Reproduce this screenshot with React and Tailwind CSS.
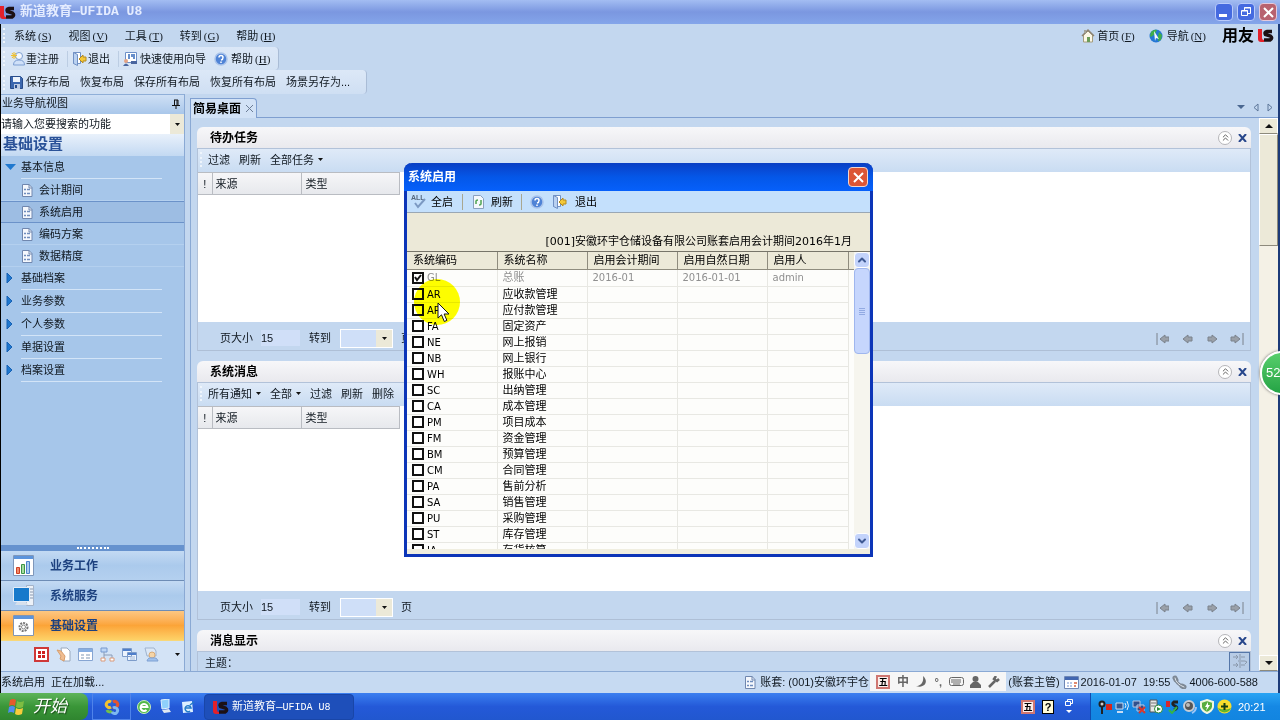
import { useState } from 'react'
import clsx from 'clsx'
import { ChevronsUp, ChevronDown, ChevronUp } from 'lucide-react'

const MENUS = [['系统', 'S'], ['视图', 'V'], ['工具', 'T'], ['转到', 'G'], ['帮助', 'H']]
const LAYOUT_ACTIONS = ['恢复布局', '保存所有布局', '恢复所有布局', '场景另存为...']
const BASIC_INFO = ['会计期间', '系统启用', '编码方案', '数据精度']
const GROUPS = ['基础档案', '业务参数', '个人参数', '单据设置', '档案设置']
const MODULES = [
  { code: 'GL', name: '总账', period: '2016-01', date: '2016-01-01', user: 'admin' },
  { code: 'AR', name: '应收款管理' },
  { code: 'AP', name: '应付款管理' },
  { code: 'FA', name: '固定资产' },
  { code: 'NE', name: '网上报销' },
  { code: 'NB', name: '网上银行' },
  { code: 'WH', name: '报账中心' },
  { code: 'SC', name: '出纳管理' },
  { code: 'CA', name: '成本管理' },
  { code: 'PM', name: '项目成本' },
  { code: 'FM', name: '资金管理' },
  { code: 'BM', name: '预算管理' },
  { code: 'CM', name: '合同管理' },
  { code: 'PA', name: '售前分析' },
  { code: 'SA', name: '销售管理' },
  { code: 'PU', name: '采购管理' },
  { code: 'ST', name: '库存管理' },
  { code: 'IA', name: '存货核算' },
]

export default function App() {
  return (
    <div
      lang="zh-CN"
      className="relative flex h-screen flex-col overflow-hidden whitespace-nowrap bg-[#c3d7ef] font-['Liberation_Sans','Noto_Sans_CJK_SC',sans-serif] text-[11px] leading-4 text-[#101820]"
    >
      <TitleBar />
      <div className="flex min-h-0 flex-1 flex-col border-l border-r-2 border-l-black border-r-[#1c3a78]">
        <MenuBar />
        <Toolbars />
        <div className="flex min-h-0 flex-1 gap-[5px]">
          <Sidebar />
          <Desktop />
        </div>
        <StatusBar />
      </div>
      <Taskbar />
      <div className="pointer-events-none absolute inset-0 flex items-center justify-center pr-[3px]">
        <EnableDialog />
      </div>
      <div className="absolute -right-6 top-[351px] flex h-11 w-11 items-center rounded-full border-2 border-white bg-linear-to-b from-[#57cf6c] to-[#23a345] pl-1 text-[13px] text-white shadow-[0_0_3px_#555]">
        52
      </div>
    </div>
  )
}

function TitleBar() {
  return (
    <header className="flex h-6 shrink-0 items-center bg-linear-to-b from-[#a3bdf2] via-[#7b97e0] to-[#84a5ea] pr-[3px]">
      <Us />
      <h1 className="ml-1 flex-1 font-['Liberation_Mono','Noto_Sans_CJK_SC',monospace] text-[13px] font-bold text-[#e4ecff]">
        新道教育—UFIDA U8
      </h1>
      <div className="flex gap-1">
        <button aria-label="最小化" className="flex h-[18px] w-[18px] items-end rounded-sm border border-[#b9cbfb] bg-[#456ae0] p-[3px]">
          <span className="h-[3px] w-2 bg-white" />
        </button>
        <button aria-label="还原" className="flex h-[18px] w-[18px] items-center justify-center rounded-sm border border-[#b9cbfb] bg-[#456ae0]">
          <Restore />
        </button>
        <button aria-label="关闭" className="flex h-[18px] w-[18px] items-center justify-center rounded-sm border border-[#e3c9dc] bg-[#b8626f]">
          <Cross />
        </button>
      </div>
    </header>
  )
}

function Hot({ text, letter }) {
  return (
    <span>
      {text}
      <span className="ml-0.5 font-['Liberation_Serif',serif]">(<u>{letter}</u>)</span>
    </span>
  )
}

function MenuBar() {
  return (
    <nav className="flex h-[23px] shrink-0 items-center pl-0.5">
      <Grip />
      <div className="flex flex-1 gap-[17px] pl-2">
        {MENUS.map(([text, letter]) => (
          <button key={letter}><Hot text={text} letter={letter} /></button>
        ))}
      </div>
      <a href="#home" className="flex items-center gap-0.5"><HomeIcon /><Hot text="首页" letter="F" /></a>
      <a href="#nav" className="ml-[14px] flex items-center gap-1"><GlobeIcon /><Hot text="导航" letter="N" /></a>
      <div className="ml-4 mr-1 flex items-center gap-1 text-base font-bold leading-4 text-black">用友<Us /></div>
    </nav>
  )
}

function Toolbars() {
  return (
    <div className="flex shrink-0 flex-col items-start">
      <div className="flex h-[23px] items-center rounded-r border-r border-[#a9bcd6] bg-linear-to-b from-[#dbe7f7] to-[#d3e2f4] pl-0.5 pr-2">
        <Grip />
        <button className="flex items-center pl-1"><UserIcon />重注册</button>
        <Divider />
        <button className="flex items-center gap-px"><ExitIcon />退出</button>
        <Divider />
        <button className="flex items-center gap-0.5"><WizardIcon />快速使用向导</button>
        <button className="ml-2 flex items-center gap-[3px]"><HelpIcon /><Hot text="帮助" letter="H" /></button>
      </div>
      <div className="flex h-6 items-center rounded-r border-r border-[#a9bcd6] bg-linear-to-b from-[#dce8f7] to-[#cfdff3] pl-0.5 pr-4">
        <Grip />
        <div className="flex gap-[10px] pl-1">
          <button className="flex items-center gap-[3px]"><SaveIcon />保存布局</button>
          {LAYOUT_ACTIONS.map(text => <button key={text}>{text}</button>)}
        </div>
      </div>
    </div>
  )
}

function Grip() {
  return <span className="h-[15px] w-[3px] border-l-2 border-dotted border-[#eff5fc]" />
}

function Divider() {
  return <span className="ml-2 mr-1 h-4 w-px bg-[#bccde3]" />
}

function Sidebar() {
  const [selected, setSelected] = useState('系统启用')

  return (
    <aside className="flex w-[184px] shrink-0 flex-col border-r border-[#8aa9d4] bg-[#a6c6ea]">
      <div className="flex h-5 shrink-0 items-start justify-between border-t border-[#8fafd8] bg-linear-to-b from-[#cfe0f5] to-[#a9c7ea] pl-px pr-1">
        业务导航视图
        <svg className="mt-1" width="8" height="10" viewBox="0 0 8 10" fill="none" stroke="#111"><path d="M2 1h4M2.500 1v5M5 1v5M6 1v5M0 6.500h8M4 7v3" /></svg>
      </div>
      <div className="flex h-5 shrink-0 bg-white">
        <input aria-label="搜索功能" defaultValue="请输入您要搜索的功能" className="min-w-0 flex-1 bg-white outline-none" />
        <button aria-label="搜索历史" className="flex w-[14px] items-center justify-center bg-[#ece9d8]"><Caret /></button>
      </div>
      <h2 className="h-[22px] shrink-0 bg-linear-to-b from-[#e9f1fb] to-[#c3d9f2] pl-0.5 text-[15px] leading-5 font-bold text-[#2a5298]">基础设置</h2>

      <nav className="flex min-h-0 flex-1 flex-col overflow-hidden">
        <GroupRow text="基本信息" open />
        {BASIC_INFO.map(text => (
          <button
            key={text}
            onClick={() => setSelected(text)}
            className={clsx(
              'flex h-[22px] shrink-0 items-center gap-1.5 border-y pl-5',
              selected === text ? 'border-[#6b92c9] bg-[#9dbde3]' : 'border-transparent border-b-[#b4d0ef]'
            )}
          >
            <PageIcon />{text}
          </button>
        ))}
        {GROUPS.map(text => <GroupRow key={text} text={text} />)}
      </nav>

      <div className="flex h-1.5 shrink-0 items-center justify-center bg-[#6692ce]">
        <span className="w-8 border-t-2 border-dotted border-white" />
      </div>
      <NavButton text="业务工作" icon={<ChartIcon />} />
      <NavButton text="系统服务" icon={<MonitorIcon />} />
      <NavButton text="基础设置" icon={<GearIcon />} active />
      <div className="flex h-[30px] shrink-0 items-start justify-end gap-1.5 bg-[#d3e3f6] pr-1 pt-1.5">
        <MiniIcons />
        <span className="pt-1.5"><Caret /></span>
      </div>
    </aside>
  )
}

function GroupRow({ text, open }) {
  return (
    <button className="flex h-[23px] shrink-0 items-center">
      <span className="w-5 pl-1">
        {open
          ? <svg width="11" height="7" viewBox="0 0 11 7"><path d="M0 0h11L5.500 6z" fill="#1f78cf" /></svg>
          : <svg width="8" height="11" viewBox="0 0 8 11"><path d="M2 0l5 5-5 5z" fill="#1f78cf" stroke="#1660b4" /></svg>}
      </span>
      <span className="mr-[22px] h-full flex-1 border-b border-[#d3e4f7] pt-[3px] text-left leading-4">{text}</span>
    </button>
  )
}

function NavButton({ text, icon, active }) {
  return (
    <button
      className={clsx(
        'flex h-[30px] shrink-0 items-center gap-4 border-b pl-3 text-xs font-bold text-[#1d417f]',
        active
          ? 'border-[#f8d779] bg-linear-to-b from-[#fdc781] via-[#fba438] to-[#fdd267]'
          : 'border-[#6d8cb5] bg-linear-to-b from-[#c3daf3] via-[#abcaec] to-[#b4d0ef]'
      )}
    >
      {icon}{text}
    </button>
  )
}

function Desktop() {
  return (
    <main className="flex min-w-0 flex-1 flex-col pt-1">
      <div className="flex h-5 shrink-0 items-end justify-between border-b border-[#7f9fd0]">
        <button className="-mb-px flex h-5 items-center gap-1 rounded-tr border border-b-0 border-[#7f9fd0] bg-[#d2e2f6] px-0.5 text-xs font-bold text-black">
          简易桌面
          <svg width="9" height="9" viewBox="0 0 9 9" stroke="#6c7d96"><path d="M1 1l7 7M8 1l-7 7" /></svg>
        </button>
        <div className="flex h-5 items-center gap-2 pr-[5px]">
          <svg width="8" height="5" viewBox="0 0 8 5"><path d="M0 0h8L4 4z" fill="#4a6790" /></svg>
          <svg width="6" height="9" viewBox="0 0 6 9" fill="none" stroke="#5d7699"><path d="M5 1v7L1 4.500z" /></svg>
          <svg width="6" height="9" viewBox="0 0 6 9" fill="none" stroke="#5d7699"><path d="M1 1v7l4-3.500z" /></svg>
        </div>
      </div>

      <div className="flex min-h-0 flex-1 border-l border-[#8aa9d4]">
        <div className="flex min-w-0 flex-1 flex-col gap-[10px] pl-1.5 pr-2 pt-[9px]">
          <Panel title="待办任务" className="h-[224px] shrink-0">
            <PanelToolbar actions={['过滤', '刷新', '全部任务▾']} />
            <TaskTable />
            <Pager id="tasks" />
          </Panel>
          <Panel title="系统消息" className="min-h-0 flex-1">
            <PanelToolbar actions={['所有通知▾', '全部▾', '过滤', '刷新', '删除']} />
            <TaskTable />
            <Pager id="messages" />
          </Panel>
          <Panel title="消息显示" className="h-[41px] shrink-0">
            <div className="flex h-5 items-start justify-between pl-[7px]">
              <span className="pt-[3px] leading-4">主题：</span>
              <button aria-label="固定" className="flex h-5 w-[21px] items-center justify-center border border-[#5576a8] bg-[#b8cce6]">
                <svg width="14" height="16" viewBox="0 0 14 16" fill="none" stroke="#8a98ab"><path d="M0 3h5M3 1l2 2-2 2M7 0v6M8 3h4M0 11h5M3 9l2 2-2 2M7 8v6M8 11h4M5 7h7l2 1-2 2" /></svg>
              </button>
            </div>
          </Panel>
        </div>
        <div className="flex w-[19px] shrink-0 flex-col bg-[#f4f1e6]">
          <button aria-label="向上滚动" className="flex h-4 items-center justify-center border border-white border-b-[#8d8a7c] bg-[#ece9d8]">
            <svg width="8" height="5" viewBox="0 0 8 5"><path d="M4 0l4 4H0z" fill="#111" /></svg>
          </button>
          <div className="h-28 border border-white border-b-[#8d8a7c] border-r-[#8d8a7c] bg-[#ece9d8]" />
          <div className="flex-1" />
          <button aria-label="向下滚动" className="flex h-4 items-center justify-center border border-white border-b-[#8d8a7c] bg-[#ece9d8]">
            <svg width="8" height="5" viewBox="0 0 8 5"><path d="M0 0h8L4 4z" fill="#111" /></svg>
          </button>
        </div>
      </div>
    </main>
  )
}

function Panel({ title, className, children }) {
  return (
    <section className={clsx('flex flex-col', className)}>
      <div className="flex h-[21px] shrink-0 items-center rounded-t-md bg-linear-to-b from-[#f7f7f9] to-[#e9e9ee] pl-[13px] pr-px">
        <h3 className="flex-1 text-xs font-bold text-black">{title}</h3>
        <button aria-label="折叠" className="flex h-[14px] w-[14px] items-center justify-center rounded-full border border-[#b5b5b9] bg-white">
          <ChevronsUp size={11} color="#555" />
        </button>
        <button aria-label="关闭" className="ml-0.5 flex w-4 justify-center">
          <svg width="9" height="8" viewBox="0 0 9 8" stroke="#27468b" strokeWidth="2"><path d="M1 0l7 8M8 0l-7 8" /></svg>
        </button>
      </div>
      <div className="flex min-h-0 flex-1 flex-col overflow-hidden border border-b-0 border-[#b2c2d9]">{children}</div>
    </section>
  )
}

function PanelToolbar({ actions }) {
  return (
    <div className="flex h-[23px] shrink-0 items-center gap-[9px] bg-linear-to-b from-[#dfeaf8] to-[#c9dcf2] pb-0.5">
      <div className="flex items-center gap-[5px] pl-0.5"><Grip />
        <ActionButton text={actions[0]} />
      </div>
      {actions.slice(1).map(text => <ActionButton key={text} text={text} />)}
    </div>
  )
}

function ActionButton({ text }) {
  const menu = text.endsWith('▾')
  return (
    <button className="flex items-center gap-1">
      {text.replace('▾', '')}
      {menu && <Caret />}
    </button>
  )
}

function TaskTable() {
  return (
    <div className="min-h-0 flex-1 bg-white">
      <table className="w-[202px] table-fixed border-collapse text-left">
        <thead>
          <tr className="h-[22px] bg-linear-to-b from-[#f6f6f8] to-[#e6e8ec]">
            <th className="w-[14px] border border-l-0 border-[#b9bcc2] text-center font-normal">!</th>
            <th className="w-[89px] border border-[#b9bcc2] pl-[3px] font-normal">来源</th>
            <th className="border border-[#b9bcc2] pl-1 font-normal">类型</th>
          </tr>
        </thead>
      </table>
    </div>
  )
}

function Pager({ id }) {
  return (
    <div className="flex h-[29px] shrink-0 items-center border-b border-[#aebfd6] bg-[#c3d7ef] pl-[22px] pr-1.5 pt-1">
      <label htmlFor={`${id}-size`}>页大小</label>
      <input id={`${id}-size`} defaultValue="15" className="ml-2 h-4 w-[39px] bg-[#d0dff8]" />
      <label htmlFor={`${id}-page`} className="ml-[9px]">转到</label>
      <div className="relative ml-[9px] mr-2 h-[19px] w-[53px]">
        <select id={`${id}-page`} className="h-full w-full appearance-none border border-white bg-[#cfdff8]"><option /></select>
        <span className="pointer-events-none absolute inset-y-px right-px flex w-4 items-center justify-center bg-[#ece9d8]"><Caret /></span>
      </div>
      <span className="flex-1">页</span>
      <div className="flex gap-[11px] pt-0.5">
        <PageArrow label="首页" d="M2 1v12M5 7l5-4v2h4v4h-4v2z" />
        <PageArrow label="上一页" d="M3 7l5-4v2h4v4H8v2z" />
        <PageArrow label="下一页" d="M12 7L7 3v2H3v4h4v2z" />
        <PageArrow label="末页" d="M13 1v12M10 7L5 3v2H1v4h4v2z" />
      </div>
    </div>
  )
}

function PageArrow({ label, d }) {
  return (
    <button aria-label={label}>
      <svg width="14" height="14" viewBox="0 0 14 14" fill="#9aa0a8" stroke="#7b828c"><path d={d} /></svg>
    </button>
  )
}

function EnableDialog() {
  return (
    <div
      role="dialog"
      aria-label="系统启用"
      className="pointer-events-auto relative flex h-[394px] w-[469px] flex-col rounded-t-lg border-[3px] border-t-0 border-[#0c35b8] bg-[#ece9d8] text-black"
    >
      <div className="-mx-[3px] flex h-7 shrink-0 items-center justify-between rounded-t-lg bg-linear-to-b from-[#0a3fc4] via-[#0457e8] to-[#0660fb] pl-1 pr-[5px]">
        <h2 className="text-xs font-bold text-white">系统启用</h2>
        <button aria-label="关闭" className="flex h-5 w-5 items-center justify-center rounded border border-[#f0d5cf] bg-[#dc5535]"><Cross /></button>
      </div>
      <div className="flex h-[22px] shrink-0 items-center border-b border-[#9aa7b4] bg-[#c4e0fc] pl-1">
        <button className="flex items-center gap-1"><AllIcon />全启</button>
        <span className="mx-[9px] h-4 w-px bg-[#a9a790]" />
        <button className="flex items-center gap-1.5"><RefreshIcon />刷新</button>
        <span className="mx-2 h-4 w-px bg-[#a9a790]" />
        <button aria-label="帮助"><HelpIcon /></button>
        <button className="ml-2 flex items-center gap-2"><ExitIcon />退出</button>
      </div>
      <p className="shrink-0 pb-px pr-[18px] pt-[21px] text-right font-['DejaVu_Sans','Noto_Sans_CJK_SC',sans-serif]">
        [001]安徽环宇仓储设备有限公司账套启用会计期间2016年1月
      </p>
      <div className="flex min-h-0 flex-1 border-t border-[#77756a] bg-[#fdfdfb]">
        <div className="min-w-0 flex-1 overflow-hidden">
          <ModuleTable />
        </div>
        <div className="flex w-4 shrink-0 flex-col bg-[#f6f5ee]">
          <button aria-label="向上滚动" className="flex h-4 items-center justify-center rounded-sm border border-white bg-[#c3d3fb] text-[#3f5a94]"><ChevronUp size={12} strokeWidth={4} /></button>
          <div className="flex h-[86px] flex-col items-center justify-center gap-px rounded-sm border border-[#9fb6ee] bg-[#c6d6fd]">
            <span className="h-px w-1.5 bg-[#92aae2]" />
            <span className="h-px w-1.5 bg-[#92aae2]" />
            <span className="h-px w-1.5 bg-[#92aae2]" />
            <span className="h-px w-1.5 bg-[#92aae2]" />
          </div>
          <div className="flex-1" />
          <button aria-label="向下滚动" className="flex h-4 items-center justify-center rounded-sm border border-white bg-[#c3d3fb] text-[#3f5a94]"><ChevronDown size={12} strokeWidth={4} /></button>
        </div>
      </div>
      <div className="h-[5px] shrink-0 bg-[#f0eee0]" />

      {/* click highlight with the pointer */}
      <div className="pointer-events-none absolute left-[7px] top-[116px] h-[46px] w-[46px] rounded-full bg-[#ffff00] mix-blend-multiply" />
      <svg className="pointer-events-none absolute left-[30px] top-[139px]" width="13" height="21" viewBox="0 0 13 21" fill="#fff" stroke="#111">
        <path d="M1 1v15l3.500-3.200L7.300 19.500l2.600-1.100-2.800-6.400H12z" />
      </svg>
    </div>
  )
}

function ModuleTable() {
  return (
    <table className="w-full table-fixed border-collapse text-left">
      <thead>
        <tr className="h-[17px] bg-[#ece9d8]">
          {['系统编码', '系统名称', '启用会计期间', '启用自然日期'].map(text => (
            <th key={text} className="w-[90px] border-b border-r border-[#8f8c7e] p-0 pl-1.5 font-normal">{text}</th>
          ))}
          <th className="w-[81px] border-b border-r border-[#8f8c7e] p-0 pl-1.5 font-normal">启用人</th>
          <th className="border-b border-[#8f8c7e] p-0" />
        </tr>
      </thead>
      <tbody className="font-['DejaVu_Sans','Noto_Sans_CJK_SC',sans-serif] text-[10px] leading-[15px]">
        {MODULES.map(row => <ModuleRow key={row.code} {...row} />)}
      </tbody>
    </table>
  )
}

function ModuleRow({ code, name, period, date, user }) {
  const [checked, setChecked] = useState(Boolean(period))
  const cell = 'border-b border-r border-[#e8e8e3] p-0 pl-[5px]'

  return (
    <tr className={clsx(period ? 'h-[17px] text-[#8f8f8f]' : 'h-4')}>
      <td className={cell}>
        <label className="relative flex items-center gap-[3px]">
          <input
            type="checkbox"
            checked={checked}
            disabled={Boolean(period)}
            onChange={e => setChecked(e.target.checked)}
            className="h-3 w-3 appearance-none border-2 border-[#111] bg-white"
          />
          {checked && (
            <svg className="absolute left-0.5" width="8" height="8" viewBox="0 0 8 8" fill="none" stroke="#111" strokeWidth="2"><path d="M1 3l2 3 4-5" /></svg>
          )}
          {code}
        </label>
      </td>
      <td className={clsx(cell, 'text-[11px]')}>{name}</td>
      <td className={cell}>{period}</td>
      <td className={cell}>{date}</td>
      <td className={cell}>{user}</td>
      <td />
    </tr>
  )
}

function StatusBar() {
  return (
    <footer className="flex h-[22px] shrink-0 items-center border-t border-[#8aa9d4] bg-[#c6daf2] pb-0.5">
      <span className="flex-1">系统启用 &nbsp;正在加载...</span>
      <PageIcon />
      <span className="ml-1 w-[110px]">账套: (001)安徽环宇仓</span>
      <div className="flex h-[19px] w-[136px] items-center justify-between bg-[#f6f6f6] px-1.5 text-[#666]">
        <WuBadge />
        <span className="text-xs font-bold">中</span>
        <svg width="12" height="12" viewBox="0 0 12 12" fill="#666"><path d="M7 0c6 5 2 13-7 10 5 0 8-4 7-10z" /></svg>
        <span className="font-bold">°,</span>
        <svg width="15" height="9" viewBox="0 0 15 9" fill="none" stroke="#666"><rect x=".5" y=".5" width="14" height="8" rx="2" /><path d="M2 3h10M2 5h10M4 7h7" /></svg>
        <svg width="11" height="12" viewBox="0 0 11 12" fill="#666"><circle cx="5.500" cy="3" r="3" /><path d="M0 12V9l3-3h5l3 3v3z" /></svg>
        <svg width="12" height="12" viewBox="0 0 12 12" fill="none" stroke="#666" strokeWidth="2.500"><path d="M1 11l6-6M11 3L9 5 6 3l2-3" /></svg>
      </div>
      <span className="ml-0.5">(账套主管)</span>
      <svg className="ml-1" width="15" height="14" viewBox="0 0 15 14">
        <path d="M.5 1.500h14v12H.500z" fill="#fff" stroke="#6e87b5" />
        <path d="M1 2h13v3H1z" fill="#4166b0" />
        <path d="M3 7h2v2H3zm3 0h2v2H6zM3 10h2v2H3zm3 0h2v2H6z" fill="#b8c8e6" />
        <path d="M10 7h3v2h-3zm0 3h2v2h-2z" fill="#e08a70" />
      </svg>
      <span className="ml-0.5">2016-01-07 &nbsp;19:55</span>
      <svg className="mx-0.5" width="15" height="14" viewBox="0 0 15 14" fill="none" strokeLinecap="round">
        <path d="M3 3q1 6 9 9" stroke="#7d8894" strokeWidth="3" />
        <path d="M3 3l1 2M10 11l2 1" stroke="#7d8894" strokeWidth="5" />
        <path d="M3 3q1 6 9 9" stroke="#dfe4ea" />
      </svg>
      <span className="mr-5">4006-600-588</span>
    </footer>
  )
}

function WuBadge() {
  return <span className="flex h-[14px] w-[14px] items-center justify-center border-2 border-[#cf7771] bg-[#fbeeea] text-[9px] leading-[10px] font-bold text-black">五</span>
}

function Taskbar() {
  return (
    <div className="flex h-[27px] shrink-0 bg-linear-to-b from-[#3c7ff0] via-[#2459d8] to-[#2157cf] text-white">
      <button className="flex w-[88px] items-center gap-2 rounded-r-lg bg-linear-to-b from-[#5eb45a] via-[#3a9638] to-[#2f852f] pl-2 text-[17px] italic [text-shadow:1px_1px_1px_#1c4d1c]">
        <WindowsFlag />
        开始
      </button>
      <div className="ml-1 flex w-[39px] items-center justify-center border border-[#4f83ea]">
        <svg width="16" height="16" viewBox="0 0 16 16" fill="none" strokeWidth="3">
          <path d="M7 3a3 3 0 1 0 0 5" stroke="#f2c230" /><path d="M9 3a3 3 0 1 1 0 5" stroke="#e4552f" />
          <path d="M3 11a3 3 0 0 0 5 1" stroke="#74c04b" /><path d="M9 9a3 3 0 1 1-1 4" stroke="#7db8f0" />
        </svg>
      </div>
      <div className="flex items-center gap-[9px] pl-1.5">
        <svg width="14" height="14" viewBox="0 0 14 14"><circle cx="7" cy="7" r="6.500" fill="#50b848" stroke="#c9ecc0" /><path d="M3.500 7h7a3.500 3.500 0 1 0-1 3" fill="none" stroke="#fff" strokeWidth="2" /></svg>
        <svg width="12" height="15" viewBox="0 0 12 15"><path d="M1 1l8-1v9l-7 1z" fill="#8fd0fb" stroke="#dff0fd" /><path d="M2 11l7-1 2 3-7 1z" fill="#dfe8f2" /></svg>
        <svg width="14" height="14" viewBox="0 0 14 14"><path d="M1 2l10-1 1 11-10 1z" fill="#dcefff" /><path d="M4 8h6a3 3 0 1 0-1 3M9 5l4-3" fill="none" stroke="#257cc9" strokeWidth="1.500" /></svg>
      </div>
      <button className="ml-[9px] mt-px flex w-[150px] items-center gap-[3px] rounded-sm border border-[#1946a8] bg-[#1e4fba] pl-2 font-['Liberation_Mono','Noto_Sans_CJK_SC',monospace]">
        <Us />
        <span>新道教育—<span className="text-[10px]">UFIDA U8</span></span>
      </button>
      <div className="flex flex-1 items-center justify-end gap-[7px] pr-[17px]">
        <WuBadge />
        <span className="flex h-[14px] w-3 items-center justify-center border border-black bg-[#fffbd8] text-[11px] font-bold leading-3 text-black">?</span>
        <div className="ml-1 flex flex-col items-center gap-1">
          <svg width="8" height="7" viewBox="0 0 8 7" fill="none" stroke="#fff"><path d="M2.500 2V.500h5v4H6M.500 2.500h5v4h-5z" /></svg>
          <svg width="6" height="4" viewBox="0 0 6 4"><path d="M0 0h6L3 3z" fill="#fff" /></svg>
        </div>
      </div>
      <div className="flex w-[190px] items-center gap-[3px] border-l border-[#0f4bb0] bg-linear-to-b from-[#29a4f4] via-[#1588e4] to-[#1285e0] pl-[7px]">
        <TrayIcons />
        <time className="ml-[3px]">20:21</time>
      </div>
    </div>
  )
}

function TrayIcons() {
  return (
    <>
      <svg width="14" height="14" viewBox="0 0 14 14"><circle cx="4" cy="4" r="2.500" fill="#ccc" stroke="#222" strokeWidth="2" /><path d="M4 6v8" stroke="#222" strokeWidth="2" /><path d="M8 4h6v6H8z" fill="#d8261c" /></svg>
      <svg width="14" height="14" viewBox="0 0 14 14" fill="none"><path d="M1 3h7v6H1z" fill="#35588f" stroke="#c9dcf3" /><path d="M2 12h6" stroke="#c9dcf3" strokeWidth="2" /><path d="M10 3q2 3 0 5M12 1q3 5 0 9" stroke="#e2effc" /></svg>
      <svg width="14" height="14" viewBox="0 0 14 14" fill="none"><path d="M1 1h7v6H1zM5 5h7v6H5z" fill="#31508c" stroke="#b8c9e6" /><path d="M7 7l6 6M13 7l-6 6" stroke="#d9362b" strokeWidth="2" /></svg>
      <svg width="14" height="15" viewBox="0 0 14 15"><path d="M1 1h7v12H1z" fill="#e6e6e6" stroke="#555" /><path d="M2 4h5M2 7h5" stroke="#777" /><circle cx="9.500" cy="10" r="4" fill="#fff" stroke="#2d8b39" /><path d="M8 8l4 2-4 2z" fill="#2d8b39" /></svg>
      <svg width="14" height="14" viewBox="0 0 14 14" fill="none"><path d="M2 1v6" stroke="#d8262b" strokeWidth="4" /><path d="M12 2H8q-3 2 1 4t-1 4" stroke="#222" strokeWidth="3" /><path d="M3 10l3 3 5-6" stroke="#35b34b" strokeWidth="2" /></svg>
      <svg width="14" height="14" viewBox="0 0 14 14"><circle cx="6" cy="6" r="5" fill="#555" stroke="#c6ccd4" strokeWidth="2" /><circle cx="5" cy="5" r="2" fill="#bbb" /><path d="M9 13q4-2 4-6" fill="none" stroke="#9cc5f5" strokeWidth="2" /></svg>
      <svg width="14" height="15" viewBox="0 0 14 15"><path d="M7 1l6 2v5q-1 4-6 6-5-2-6-6V3z" fill="#59ad3f" stroke="#f1f7df" strokeWidth="2" /><path d="M8 3L5 8h2l-1 4 4-6H8z" fill="#fff" /></svg>
      <svg width="15" height="15" viewBox="0 0 15 15"><circle cx="7.500" cy="7.500" r="7" fill="#f8dd2c" /><path d="M1 9a7 7 0 0 0 13 0q-6 3-13 0z" fill="#62b52e" /><path d="M7.500 4v7M4 7.500h7" stroke="#173e14" strokeWidth="2" /></svg>
    </>
  )
}

function MiniIcons() {
  return (
    <div className="mr-2.5 flex gap-[7px]">
      <svg width="15" height="15" viewBox="0 0 15 15"><path d="M1 1h13v13H1z" fill="#fff" stroke="#cf3838" strokeWidth="2" /><path d="M4 4h3v3H4zm4 0h3v3H8zM4 8h3v3H4zm4 0h3v3H8z" fill="#cf2020" /></svg>
      <svg width="15" height="15" viewBox="0 0 15 15"><path d="M5 1h6l3 3v10H7z" fill="#fff" stroke="#9aa9bd" /><path d="M1 3l4 1 4 5-1 5-4-2 1-3z" fill="#f0bd91" stroke="#d89e6c" /></svg>
      <svg width="15" height="15" viewBox="0 0 15 15"><path d="M.5 1.500h14v12H.500z" fill="#fff" stroke="#86a5d2" /><path d="M1 2h13v3H1z" fill="#86aee2" /><path d="M3 7h3v2H3zm5 0h4v2H8zm-5 3h3v2H3zm5 0h4v2H8z" fill="#bfcbd9" /></svg>
      <svg width="15" height="15" viewBox="0 0 15 15" fill="none"><path d="M1 1h6v4H1z" fill="#bcd5f5" stroke="#7799cf" /><path d="M4 5v6M4 8h8v3" stroke="#8b9cb7" /><path d="M1 11h4v3H1zm9 0h4v3h-4z" fill="#fff" stroke="#d99a7a" /></svg>
      <svg width="15" height="15" viewBox="0 0 15 15"><path d="M.5 1.500h9v8h-9zM5.500 5.500h9v8h-9z" fill="#edf4fd" stroke="#7d9cca" /><path d="M1 2h8v2H1zm5 4h8v2H6z" fill="#4f7fcb" /><path d="M8 10h5M8 12h5" stroke="#a7bbd8" /></svg>
      <svg width="15" height="15" viewBox="0 0 15 15"><path d="M1 1h9l2 3v5H3z" fill="#dce8f7" stroke="#9fb3cf" /><circle cx="8" cy="8" r="3" fill="#f5d5a8" stroke="#d8aa76" /><path d="M3 14q1-4 5-3 5-1 6 3z" fill="#9fc1ee" stroke="#7fa1d3" /></svg>
    </div>
  )
}

function Caret() {
  return <svg width="5" height="3" viewBox="0 0 5 3"><path d="M0 0h5L2.500 3z" fill="#111" /></svg>
}

function Cross() {
  return <svg width="11" height="11" viewBox="0 0 11 11" stroke="#fff" strokeWidth="2"><path d="M1 1l9 9M10 1l-9 9" /></svg>
}

function Restore() {
  return <svg width="10" height="10" viewBox="0 0 10 10" fill="none" stroke="#fff"><path d="M3.500 3V.500h6v6H7M.500 3.500h6v5h-6zM3 1h7M1 4h6" /></svg>
}

function Us() {
  return (
    <svg width="16" height="13" viewBox="0 0 16 13" fill="none">
      <path d="M0 0h4v9q0 2 2 2v2H3q-3 0-3-3z" fill="#e3202a" />
      <path d="M14 2.500H9q-3 .500-1.500 3l5 1.500q2.500 2-.500 4H6" stroke="#1c1014" strokeWidth="3.500" />
    </svg>
  )
}

function HomeIcon() {
  return (
    <svg width="14" height="15" viewBox="0 0 14 15">
      <path d="M2.500 7v7h9V7L7 3z" fill="#fbf7e6" stroke="#a59c7c" /><path d="M1 8l6-6 6 6" fill="none" stroke="#8c8272" strokeWidth="1.500" />
      <path d="M3 2h2v3H3z" fill="#a3a39a" /><path d="M6 9h3v5H6z" fill="#6b9c57" />
    </svg>
  )
}

function GlobeIcon() {
  return (
    <svg width="14" height="14" viewBox="0 0 14 14">
      <circle cx="7" cy="7" r="6.500" fill="#2477d4" /><path d="M2 3q3-3 6-2l-2 4-4 3-1-1zm8 0l3 3-1 5-3 1V7z" fill="#3fae4b" /><path d="M5 2l5 8-3-1-1 3z" fill="#f4f9ff" />
    </svg>
  )
}

function UserIcon() {
  return (
    <svg width="16" height="15" viewBox="0 0 16 15">
      <circle cx="9" cy="5" r="3.500" fill="#f4f8fe" stroke="#7d9fd3" /><path d="M3.500 14q0-5 5.500-5t5.500 5z" fill="#cfe0f8" stroke="#7d9fd3" />
      <path d="M4 1v7M1 4.500h6M2 2l4 5M6 2L2 7" stroke="#f0c02e" />
    </svg>
  )
}

function ExitIcon() {
  return (
    <svg width="15" height="15" viewBox="0 0 15 15">
      <path d="M1.500 1.500h7v11h-7z" fill="#fff" stroke="#7191c4" /><path d="M1.500 1.500l4 2v11l-4-2z" fill="#b9d1f1" stroke="#7191c4" />
      <path d="M7 8l4-4v2h3v4h-3v2z" fill="#f4c838" stroke="#b68a1c" />
    </svg>
  )
}

function WizardIcon() {
  return (
    <svg width="15" height="15" viewBox="0 0 15 15">
      <path d="M2.500 1.500h11v10h-11z" fill="#fff" stroke="#6c8fc8" /><path d="M6 3v5M9 3v3M11 3v5" stroke="#3569ba" strokeWidth="1.500" />
      <circle cx="3" cy="10" r="2" fill="#e4a384" /><path d="M0 15q3-5 6 0zM8 10h6v3H8z" fill="#49659f" />
    </svg>
  )
}

function HelpIcon() {
  return (
    <svg width="14" height="14" viewBox="0 0 14 14">
      <circle cx="7" cy="7" r="6" fill="#4f83d6" stroke="#a9c3ea" strokeWidth="1.500" /><path d="M5 5.500q0-2 2-2t2 2-2 2.500M7 9.500v1.500" fill="none" stroke="#fff" strokeWidth="1.500" />
    </svg>
  )
}

function SaveIcon() {
  return (
    <svg width="13" height="13" viewBox="0 0 13 13">
      <path d="M.5.500h10l2 2v10H.500z" fill="#3c67ae" stroke="#284c8a" /><path d="M3 1h7v5H3z" fill="#eef4fc" /><path d="M4 8h6v5H4z" fill="#bdcbe2" /><path d="M5 9h2v3H5z" fill="#284c8a" />
    </svg>
  )
}

function PageIcon() {
  return (
    <svg width="12" height="14" viewBox="0 0 12 14">
      <path d="M1.500 1.500H8l3 3v9H1.500z" fill="#f5f8fd" stroke="#7087ae" /><path d="M8 1v4h3" fill="none" stroke="#7087ae" />
      <path d="M3 6.500h2m1 0h3M3 10.500h2m1 0h3" stroke="#6f8dbd" strokeWidth="1.500" />
    </svg>
  )
}

function ChartIcon() {
  return (
    <svg width="21" height="21" viewBox="0 0 21 21">
      <path d="M.5.500h20v20H.500z" fill="#fff" stroke="#7f97ba" /><path d="M1 1h19v3H1z" fill="#5c94dc" />
      <path d="M3.500 12.500h3v6h-3z" fill="#f08a6b" stroke="#cf3f22" /><path d="M8.500 9.500h3v9h-3z" fill="#a5dba0" stroke="#3c9446" /><path d="M13.500 6.500h3v12h-3z" fill="#a8cbf1" stroke="#4c83cb" />
    </svg>
  )
}

function MonitorIcon() {
  return (
    <svg width="21" height="21" viewBox="0 0 21 21">
      <path d="M13.500.500h7v20h-7z" fill="#edf2f8" stroke="#a4b3c8" /><path d="M17 4h3M17 7h3M17 10h3M17 13h3" stroke="#8898b0" />
      <path d="M.5 2.500h16v14H.500z" fill="#1679cb" stroke="#e3edf8" /><path d="M4 17h9l2 3H2z" fill="#d6e0ec" />
    </svg>
  )
}

function GearIcon() {
  return (
    <svg width="21" height="21" viewBox="0 0 21 21" fill="none">
      <path d="M.5.500h20v20H.500z" fill="#fff" stroke="#8095b4" /><path d="M1 1h19v3H1z" fill="#5c94dc" />
      <circle cx="10.500" cy="12" r="4" stroke="#777" strokeWidth="2" strokeDasharray="2 1" /><circle cx="10.500" cy="12" r="2" stroke="#888" />
    </svg>
  )
}

function AllIcon() {
  return (
    <svg width="16" height="15" viewBox="0 0 16 15">
      <text x="0" y="6" fontSize="7" fontWeight="bold" fill="#55677c">ALL</text><path d="M4 9l3 4 7-8" fill="none" stroke="#7c99c2" strokeWidth="2" />
    </svg>
  )
}

function RefreshIcon() {
  return (
    <svg width="13" height="14" viewBox="0 0 13 14" fill="none">
      <path d="M1.500.500h7l3 3v10h-10z" fill="#f4f8fc" stroke="#8aa0be" /><path d="M4 9V6q0-1 2-1M9 5v4q0 1-2 1" stroke="#4da350" strokeWidth="1.500" />
    </svg>
  )
}

function WindowsFlag() {
  return (
    <svg width="17" height="17" viewBox="0 0 17 17">
      <path d="M2 2q3-2 6 0L7 8Q4 6 1 8z" fill="#e65a2b" /><path d="M9 3q3 2 7 0l-1 6q-4 2-7 0z" fill="#7ebd42" />
      <path d="M1 9q3-2 6 0l-1 6q-3-2-6 0z" fill="#4f8df0" /><path d="M8 10q3 2 7 0l-1 6q-4 2-7 0z" fill="#f7cc3b" />
    </svg>
  )
}
